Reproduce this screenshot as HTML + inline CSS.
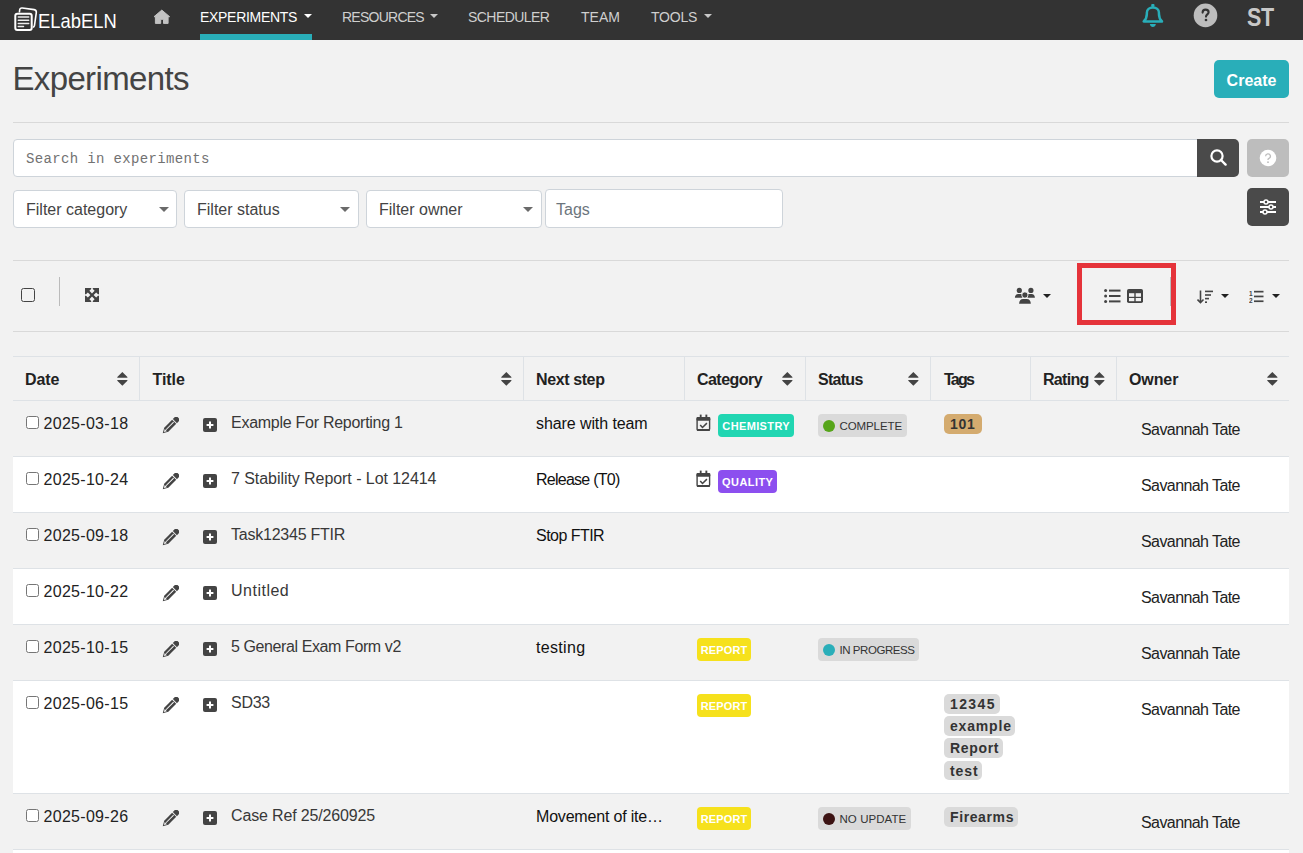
<!DOCTYPE html>
<html><head><meta charset="utf-8">
<style>
*{box-sizing:border-box;margin:0;padding:0}
html,body{width:1303px;height:853px;overflow:hidden}
body{background:#f2f2f2;font-family:"Liberation Sans",sans-serif;color:#222;position:relative}
.abs{position:absolute}
#nav{position:absolute;left:0;top:0;width:1303px;height:40px;background:#333}
.navt{position:absolute;top:9px;font-size:14px;line-height:16px;color:#cfcfcf;white-space:nowrap}
.caret{position:absolute;width:0;height:0;border-left:4px solid transparent;border-right:4px solid transparent;border-top:4px solid #c8c8c8}
.hr{position:absolute;left:13px;width:1276px;height:1px;background:#d9d9d9}
.inp{position:absolute;background:#fff;border:1px solid #ced4da;border-radius:4px}
.sel{font-size:16px;color:#444}
.btn{position:absolute;border-radius:5px}
.th{position:absolute;color:#222;white-space:nowrap}
.td{position:absolute;color:#222;white-space:nowrap}
.cb{position:absolute;width:13px;height:13px;border:1px solid #767676;border-radius:2.5px;background:#fff}
.badge{position:absolute;height:23px;border-radius:4px;color:#fff;font-weight:bold;font-size:11px;line-height:25px;text-align:center;white-space:nowrap}
.sbadge{position:absolute;white-space:nowrap;height:23px;border-radius:4px;background:#dadada;color:#333;font-size:11.5px;line-height:25px;padding-left:21.5px}
.dot{position:absolute;left:5px;top:5.5px;width:12px;height:12px;border-radius:6px}
.tag{position:absolute;height:19.5px;border-radius:5px;background:#dadada;color:#333;font-weight:bold;font-size:14px;line-height:20px;padding:0 0 0 6px;white-space:nowrap}
</style></head>
<body>
<div id="nav">
  <svg class="abs" style="left:10px;top:4px" width="30" height="30" viewBox="0 0 30 30">
    <path d="M9.4 8.5 L9.6 6.6 Q9.7 3.7 12.3 4 L24.2 5.6 Q26.6 6 26.3 8.6 L24.5 21.3 Q24.2 23.2 22.9 23.1" fill="none" stroke="#fff" stroke-width="1.6" stroke-linejoin="round"/>
    <rect x="5.3" y="9.8" width="16.4" height="16.2" rx="2" fill="#333" stroke="#fff" stroke-width="2"/>
    <path d="M8.3 13.1h10.4M8.3 16.3h10.4M8.3 19.5h10.4M8.3 22.5h5.2" stroke="#eee" stroke-width="1.5" stroke-linecap="round"/>
  </svg>
  <div class="abs" style="left:37.5px;top:9px;font-size:21px;line-height:24px;color:#fff;transform:scaleX(0.875);transform-origin:0 0">ELabELN</div>
  <svg class="abs" style="left:152px;top:9px" width="19" height="16" viewBox="0 0 19 16">
    <path d="M9.8 1.1 L2 7.7 L3.4 7.7 L3.4 14.4 L8.7 14.4 L8.7 10.3 L11.5 10.3 L11.5 14.4 L16.1 14.4 L16.1 7.7 L17.6 7.7 Z" fill="#c2c2c2" stroke="#c2c2c2" stroke-width="1" stroke-linejoin="round"/>
  </svg>
  <div class="navt" style="left:200px;color:#fff;letter-spacing:-0.3px">EXPERIMENTS</div>
  <div class="caret" style="left:304px;top:14px;border-top-color:#fff"></div>
  <div class="abs" style="left:200px;top:34px;width:112px;height:6px;background:#29aeb9"></div>
  <div class="navt" style="left:342px;letter-spacing:-0.75px">RESOURCES</div>
  <div class="caret" style="left:430px;top:14px"></div>
  <div class="navt" style="left:468px;letter-spacing:-0.55px">SCHEDULER</div>
  <div class="navt" style="left:581px;letter-spacing:0px">TEAM</div>
  <div class="navt" style="left:651px;letter-spacing:-0.2px">TOOLS</div>
  <div class="caret" style="left:704px;top:14px"></div>
  <svg class="abs" style="left:1138px;top:0px" width="30" height="30" viewBox="0 0 30 30">
    <rect x="13.2" y="3.9" width="3.3" height="3" rx="1" fill="#29aeb9"/>
    <path d="M5.7 21.4 L24 21.4 C21.6 19 20.95 17 20.95 14 V12.7 C20.95 9.4 18.4 7.45 14.9 7.45 C11.4 7.45 8.85 9.4 8.85 12.7 V14 C8.85 17 8.2 19 5.7 21.4 Z" fill="none" stroke="#29aeb9" stroke-width="2.5" stroke-linejoin="round"/>
    <path d="M11.8 24.1 H17.9 C17.5 26 16.5 27.1 14.85 27.1 C13.2 27.1 12.2 26 11.8 24.1 Z" fill="#29aeb9"/>
  </svg>
  <svg class="abs" style="left:1193px;top:3px" width="25" height="25" viewBox="0 0 25 25">
    <circle cx="12.5" cy="12.4" r="11.8" fill="#bdbdbd"/>
    <path d="M9.6 9.6 C9.6 7.6 10.9 6.6 12.6 6.6 C14.4 6.6 15.6 7.7 15.6 9.2 C15.6 11.3 13 11.4 13 13.6" fill="none" stroke="#333" stroke-width="2.1" stroke-linecap="round"/>
    <circle cx="13" cy="17" r="1.35" fill="#333"/>
  </svg>
  <div class="abs" style="left:1246.5px;top:3px;font-size:25px;line-height:28px;font-weight:bold;color:#c8c8c8;letter-spacing:-0.5px;transform:scaleX(0.86);transform-origin:0 0">ST</div>
</div>

<div class="abs" style="left:12.5px;top:60px;font-size:33px;line-height:38px;letter-spacing:-0.65px;color:#444">Experiments</div>
<div class="btn" style="left:1214px;top:60px;width:75px;height:38px;background:#29aeb9;color:#fff;font-weight:bold;font-size:16px;text-align:center;line-height:41px">Create</div>
<div class="hr" style="top:122px"></div>

<!-- search -->
<div class="inp" style="left:13px;top:139px;width:1185px;height:38px;border-radius:4px 0 0 4px"></div>
<div class="abs" style="left:26px;top:151px;font-family:'Liberation Mono',monospace;font-size:14px;letter-spacing:0.35px;color:#727272">Search in experiments</div>
<div class="btn" style="left:1197px;top:139px;width:42px;height:38px;background:#4a4a4a;border-radius:0 5px 5px 0"></div>
<svg class="abs" style="left:1210px;top:149px" width="17" height="17" viewBox="0 0 17 17">
  <circle cx="7" cy="7" r="5.6" fill="none" stroke="#fff" stroke-width="2.2"/>
  <path d="M11 11l4.6 4.6" stroke="#fff" stroke-width="2.4" stroke-linecap="round"/>
</svg>
<div class="btn" style="left:1247px;top:139px;width:42px;height:38px;background:#bdbdbd"></div>
<svg class="abs" style="left:1259px;top:149px" width="18" height="18" viewBox="0 0 18 18">
  <circle cx="9" cy="9" r="8.3" fill="#fff"/>
  <path d="M6.6 7.2a2.4 2.4 0 1 1 3.4 2.2c-.6.3-1 .7-1 1.4v.3" fill="none" stroke="#bdbdbd" stroke-width="1.3"/>
  <circle cx="9" cy="13.2" r="0.9" fill="#bdbdbd"/>
</svg>

<div class="inp" style="left:13px;top:190px;width:164px;height:38px"></div>
<div class="inp" style="left:184px;top:190px;width:175px;height:38px"></div>
<div class="inp" style="left:366px;top:190px;width:176px;height:38px"></div>
<div class="inp" style="left:545px;top:189px;width:238px;height:39px"></div>
<div class="sel" style="position:absolute;left:26px;top:201px">Filter category</div>
<div class="caret" style="left:159px;top:207px;border-top-color:#6a6a6a;border-left-width:5px;border-right-width:5px;border-top-width:5px"></div>
<div class="sel" style="position:absolute;left:197px;top:201px">Filter status</div>
<div class="caret" style="left:340px;top:207px;border-top-color:#6a6a6a;border-left-width:5px;border-right-width:5px;border-top-width:5px"></div>
<div class="sel" style="position:absolute;left:379px;top:201px">Filter owner</div>
<div class="caret" style="left:522.5px;top:207px;border-top-color:#6a6a6a;border-left-width:5px;border-right-width:5px;border-top-width:5px"></div>
<div class="sel" style="position:absolute;left:556px;top:201px;color:#6c757d">Tags</div>
<div class="btn" style="left:1247px;top:188px;width:42px;height:38px;background:#4a4a4a"></div>
<svg class="abs" style="left:1259px;top:199px" width="18" height="18" viewBox="0 0 18 18">
  <path d="M1 3h16M1 8h16M1 13h16" stroke="#fff" stroke-width="1.8"/>
  <circle cx="7" cy="3" r="2" fill="#4a4a4a" stroke="#fff" stroke-width="1.5"/>
  <circle cx="12" cy="8" r="2" fill="#4a4a4a" stroke="#fff" stroke-width="1.5"/>
  <circle cx="6" cy="13" r="2" fill="#4a4a4a" stroke="#fff" stroke-width="1.5"/>
</svg>

<div class="hr" style="top:260px"></div>
<div class="hr" style="top:331px"></div>

<!-- toolbar -->
<div class="abs" style="left:21px;top:288px;width:14px;height:14px;border:1.5px solid #444;border-radius:2.5px"></div>
<div class="abs" style="left:59px;top:277px;width:1px;height:29px;background:#bbb"></div>
<svg class="abs" style="left:85px;top:288px" width="14" height="14" viewBox="0 0 14 14">
  <rect x="0" y="0" width="14" height="14" fill="#444"/>
  <g fill="#f2f2f2"><path d="M6.2 0 L7.8 0 L7.8 1 L9.6 2.8 L7 5.4 L4.4 2.8 L6.2 1 Z"/><path d="M6.2 0 L7.8 0 L7.8 1 L9.6 2.8 L7 5.4 L4.4 2.8 L6.2 1 Z" transform="rotate(90 7 7)"/><path d="M6.2 0 L7.8 0 L7.8 1 L9.6 2.8 L7 5.4 L4.4 2.8 L6.2 1 Z" transform="rotate(180 7 7)"/><path d="M6.2 0 L7.8 0 L7.8 1 L9.6 2.8 L7 5.4 L4.4 2.8 L6.2 1 Z" transform="rotate(270 7 7)"/></g>
</svg>
<!-- users -->
<svg class="abs" style="left:1014px;top:287px" width="22" height="18" viewBox="0 0 22 18">
  <circle cx="5.3" cy="3.4" r="2.6" fill="#444"/><circle cx="16.9" cy="3.4" r="2.6" fill="#444"/>
  <path d="M0.9 10.8 C0.9 8.6 2.2 7 4.2 7 H7.6 C7.6 8.5 8 9.8 8.3 10.8 Z" fill="#444"/>
  <path d="M20.9 10.8 C20.9 8.6 19.6 7 17.6 7 H14.2 C14.2 8.5 13.8 9.8 13.5 10.8 Z" fill="#444"/>
  <circle cx="10.9" cy="8" r="3.1" fill="#444" stroke="#f2f2f2" stroke-width="0.8"/>
  <path d="M5.1 16.8 C5.1 13.8 6.8 12 9 12 H12.9 C15.1 12 16.8 13.8 16.8 16.8 Z" fill="#444"/>
</svg>
<div class="caret" style="left:1043px;top:294px;border-top-color:#222;border-left-width:4px;border-right-width:4px;border-top-width:4.5px"></div>
<!-- red box -->
<div class="abs" style="left:1077px;top:263px;width:99px;height:62px;border:5px solid #e5333a"></div>
<div class="abs" style="left:1170px;top:277px;width:1px;height:29px;background:#bbb"></div>
<svg class="abs" style="left:1104px;top:289px" width="17" height="14" viewBox="0 0 17 14">
  <circle cx="1.6" cy="1.6" r="1.5" fill="#444"/><circle cx="1.6" cy="7" r="1.5" fill="#444"/><circle cx="1.6" cy="12.4" r="1.5" fill="#444"/>
  <rect x="5" y="0.6" width="11.5" height="2" fill="#444"/><rect x="5" y="6" width="11.5" height="2" fill="#444"/><rect x="5" y="11.4" width="11.5" height="2" fill="#444"/>
</svg>
<svg class="abs" style="left:1127px;top:289px" width="16" height="14" viewBox="0 0 16 14">
  <rect x="0" y="0" width="16" height="14" rx="1.8" fill="#444"/>
  <rect x="2" y="4.2" width="5.3" height="3.6" fill="#f2f2f2"/><rect x="8.7" y="4.2" width="5.3" height="3.6" fill="#f2f2f2"/>
  <rect x="2" y="9" width="5.3" height="3.2" fill="#f2f2f2"/><rect x="8.7" y="9" width="5.3" height="3.2" fill="#f2f2f2"/>
</svg>
<!-- sort amount -->
<svg class="abs" style="left:1197px;top:290px" width="16" height="14" viewBox="0 0 16 14">
  <path d="M3.5 0.5v12 M0.5 9.5l3 3.2 3-3.2" fill="none" stroke="#444" stroke-width="1.6"/>
  <rect x="8" y="0.6" width="8" height="1.6" fill="#444"/><rect x="8" y="4.2" width="6" height="1.6" fill="#444"/>
  <rect x="8" y="7.8" width="4" height="1.6" fill="#444"/><rect x="8" y="11.4" width="2" height="1.6" fill="#444"/>
</svg>
<div class="caret" style="left:1221px;top:294px;border-top-color:#222;border-top-width:4.5px"></div>
<!-- list ol -->
<svg class="abs" style="left:1249px;top:290px" width="15" height="13" viewBox="0 0 15 13">
  <text x="0" y="5.5" font-family="Liberation Sans" font-weight="bold" font-size="6.5" fill="#444">1</text>
  <text x="0" y="12.8" font-family="Liberation Sans" font-weight="bold" font-size="6.5" fill="#444">2</text>
  <rect x="5" y="0.8" width="9.5" height="1.7" fill="#444"/><rect x="5" y="5.6" width="9.5" height="1.7" fill="#444"/><rect x="5" y="10.4" width="9.5" height="1.7" fill="#444"/>
</svg>
<div class="caret" style="left:1272px;top:294px;border-top-color:#222;border-top-width:4.5px"></div>

<!-- table -->
<div id="tbl" class="abs" style="left:13px;top:356px;width:1276px;height:497px">
<div class="abs" style="left:0;top:0;width:1276px;height:1px;background:#dee2e6"></div>
<div class="abs" style="left:0;top:44px;width:1276px;height:1px;background:#dee2e6"></div>
<div class="abs" style="left:126px;top:1px;width:1px;height:43px;background:#dee2e6"></div>
<div class="abs" style="left:510px;top:1px;width:1px;height:43px;background:#dee2e6"></div>
<div class="abs" style="left:671px;top:1px;width:1px;height:43px;background:#dee2e6"></div>
<div class="abs" style="left:792px;top:1px;width:1px;height:43px;background:#dee2e6"></div>
<div class="abs" style="left:917px;top:1px;width:1px;height:43px;background:#dee2e6"></div>
<div class="abs" style="left:1017px;top:1px;width:1px;height:43px;background:#dee2e6"></div>
<div class="abs" style="left:1103px;top:1px;width:1px;height:43px;background:#dee2e6"></div>
<div class="abs" style="left:0;top:45px;width:1276px;height:55px;background:#f2f2f2"></div>
<div class="abs" style="left:0;top:100px;width:1276px;height:1px;background:#dee2e6"></div>
<div class="abs" style="left:0;top:101px;width:1276px;height:55px;background:#fff"></div>
<div class="abs" style="left:0;top:156px;width:1276px;height:1px;background:#dee2e6"></div>
<div class="abs" style="left:0;top:157px;width:1276px;height:55px;background:#f2f2f2"></div>
<div class="abs" style="left:0;top:212px;width:1276px;height:1px;background:#dee2e6"></div>
<div class="abs" style="left:0;top:213px;width:1276px;height:55px;background:#fff"></div>
<div class="abs" style="left:0;top:268px;width:1276px;height:1px;background:#dee2e6"></div>
<div class="abs" style="left:0;top:269px;width:1276px;height:55px;background:#f2f2f2"></div>
<div class="abs" style="left:0;top:324px;width:1276px;height:1px;background:#dee2e6"></div>
<div class="abs" style="left:0;top:325px;width:1276px;height:112px;background:#fff"></div>
<div class="abs" style="left:0;top:437px;width:1276px;height:1px;background:#dee2e6"></div>
<div class="abs" style="left:0;top:438px;width:1276px;height:55px;background:#f2f2f2"></div>
<div class="abs" style="left:0;top:493px;width:1276px;height:1px;background:#dee2e6"></div>
<div class="abs" style="left:0;top:494px;width:1276px;height:10px;background:#fff"></div>
<div class="th" style="left:12px;top:16px;font-size:16px;line-height:16px;letter-spacing:-0.1px;font-weight:bold;">Date</div>
<svg class="abs" style="left:104px;top:16px" width="11" height="15" viewBox="0 0 11 15"><path d="M5.35 0 L10.4 5.1 L10.4 5.8 L0.3 5.8 L0.3 5.1 Z M0.3 8 L10.4 8 L10.4 8.7 L5.35 13.8 L0.3 8.7 Z" fill="#444"/></svg>
<div class="th" style="left:139.5px;top:16px;font-size:16px;line-height:16px;letter-spacing:-0.05px;font-weight:bold;">Title</div>
<svg class="abs" style="left:488px;top:16px" width="11" height="15" viewBox="0 0 11 15"><path d="M5.35 0 L10.4 5.1 L10.4 5.8 L0.3 5.8 L0.3 5.1 Z M0.3 8 L10.4 8 L10.4 8.7 L5.35 13.8 L0.3 8.7 Z" fill="#444"/></svg>
<div class="th" style="left:523px;top:16px;font-size:16px;line-height:16px;letter-spacing:-0.39px;font-weight:bold;">Next step</div>
<div class="th" style="left:684px;top:16px;font-size:16px;line-height:16px;letter-spacing:-0.54px;font-weight:bold;">Category</div>
<svg class="abs" style="left:769px;top:16px" width="11" height="15" viewBox="0 0 11 15"><path d="M5.35 0 L10.4 5.1 L10.4 5.8 L0.3 5.8 L0.3 5.1 Z M0.3 8 L10.4 8 L10.4 8.7 L5.35 13.8 L0.3 8.7 Z" fill="#444"/></svg>
<div class="th" style="left:805px;top:16px;font-size:16px;line-height:16px;letter-spacing:-0.72px;font-weight:bold;">Status</div>
<svg class="abs" style="left:895px;top:16px" width="11" height="15" viewBox="0 0 11 15"><path d="M5.35 0 L10.4 5.1 L10.4 5.8 L0.3 5.8 L0.3 5.1 Z M0.3 8 L10.4 8 L10.4 8.7 L5.35 13.8 L0.3 8.7 Z" fill="#444"/></svg>
<div class="th" style="left:931px;top:16px;font-size:16px;line-height:16px;letter-spacing:-1.73px;font-weight:bold;">Tags</div>
<div class="th" style="left:1030px;top:16px;font-size:16px;line-height:16px;letter-spacing:-0.7px;font-weight:bold;">Rating</div>
<svg class="abs" style="left:1081px;top:16px" width="11" height="15" viewBox="0 0 11 15"><path d="M5.35 0 L10.4 5.1 L10.4 5.8 L0.3 5.8 L0.3 5.1 Z M0.3 8 L10.4 8 L10.4 8.7 L5.35 13.8 L0.3 8.7 Z" fill="#444"/></svg>
<div class="th" style="left:1116px;top:16px;font-size:16px;line-height:16px;letter-spacing:-0.1px;font-weight:bold;">Owner</div>
<svg class="abs" style="left:1254px;top:16px" width="11" height="15" viewBox="0 0 11 15"><path d="M5.35 0 L10.4 5.1 L10.4 5.8 L0.3 5.8 L0.3 5.1 Z M0.3 8 L10.4 8 L10.4 8.7 L5.35 13.8 L0.3 8.7 Z" fill="#444"/></svg>
<div class="cb" style="left:13px;top:60px"></div>
<div class="td" style="left:30.5px;top:59.5px;font-size:16px;line-height:16px;letter-spacing:0.3px;">2025-03-18</div>
<svg class="abs" style="left:149px;top:61px" width="17" height="17" viewBox="0 0 17 17"><g transform="translate(8.5 8.5) rotate(-45)"><path d="M-11 0 L-6 -2.9 L5.2 -2.9 L5.2 2.9 L-6 2.9 Z" fill="#444"/><path d="M-6.2 -0.2 L4.6 -0.2" stroke="#f2f2f2" stroke-width="1.0"/><path d="M-9.3 0 L-6.6 -1.5 L-6.6 1.5 Z" fill="#f2f2f2"/><path d="M6.2 -2.9 L9.2 -2.9 Q11 -2.9 11 -1.1 L11 1.1 Q11 2.9 9.2 2.9 L6.2 2.9 Z" fill="#444"/></g></svg>
<svg class="abs" style="left:189.5px;top:62px" width="14" height="14" viewBox="0 0 14 14"><rect x="0" y="0" width="14" height="14" rx="2" fill="#444"/><path d="M7 3.6v6.8 M3.6 7h6.8" stroke="#fff" stroke-width="2"/></svg>
<div class="td" style="left:218px;top:58.5px;font-size:16px;line-height:16px;letter-spacing:-0.27px;color:#383838;">Example For Reporting 1</div>
<div class="td" style="left:523px;top:59.5px;font-size:16px;line-height:16px;letter-spacing:-0.09px;color:#111;">share with team</div>
<svg class="abs" style="left:683px;top:58px" width="15" height="18" viewBox="0 0 15 18"><rect x="3.8" y="0.6" width="1.8" height="3" fill="#444"/><rect x="9.4" y="0.6" width="1.9" height="3" fill="#444"/><rect x="1.1" y="3.6" width="12.5" height="12.7" rx="1.4" fill="none" stroke="#444" stroke-width="1.4"/><rect x="0.5" y="2.9" width="13.8" height="3.9" rx="1.2" fill="#444"/><rect x="0.8" y="15" width="13.2" height="2" rx="1" fill="#444"/><path d="M4.2 10.9 L6.5 13.5 L10.9 9.1" fill="none" stroke="#444" stroke-width="1.5"/></svg>
<div class="badge" style="left:705px;top:58px;width:76px;background:#21d6b2;letter-spacing:0.36px;text-indent:0.36px">CHEMISTRY</div>
<div class="sbadge" style="left:805px;top:58px;width:89px;letter-spacing:-0.1px"><span class="dot" style="background:#56a51a"></span>COMPLETE</div>
<div class="tag" style="left:931px;top:58.0px;width:38px;background:#d4ab6f;letter-spacing:0.75px">101</div>
<div class="td" style="left:1128px;top:66px;font-size:16px;line-height:16px;letter-spacing:-0.58px;">Savannah Tate</div>
<div class="cb" style="left:13px;top:116px"></div>
<div class="td" style="left:30.5px;top:115.5px;font-size:16px;line-height:16px;letter-spacing:0.3px;">2025-10-24</div>
<svg class="abs" style="left:149px;top:117px" width="17" height="17" viewBox="0 0 17 17"><g transform="translate(8.5 8.5) rotate(-45)"><path d="M-11 0 L-6 -2.9 L5.2 -2.9 L5.2 2.9 L-6 2.9 Z" fill="#444"/><path d="M-6.2 -0.2 L4.6 -0.2" stroke="#fff" stroke-width="1.0"/><path d="M-9.3 0 L-6.6 -1.5 L-6.6 1.5 Z" fill="#fff"/><path d="M6.2 -2.9 L9.2 -2.9 Q11 -2.9 11 -1.1 L11 1.1 Q11 2.9 9.2 2.9 L6.2 2.9 Z" fill="#444"/></g></svg>
<svg class="abs" style="left:189.5px;top:118px" width="14" height="14" viewBox="0 0 14 14"><rect x="0" y="0" width="14" height="14" rx="2" fill="#444"/><path d="M7 3.6v6.8 M3.6 7h6.8" stroke="#fff" stroke-width="2"/></svg>
<div class="td" style="left:218px;top:114.5px;font-size:16px;line-height:16px;letter-spacing:-0.06px;color:#383838;">7 Stability Report - Lot 12414</div>
<div class="td" style="left:523px;top:115.5px;font-size:16px;line-height:16px;letter-spacing:-0.74px;color:#111;">Release (T0)</div>
<svg class="abs" style="left:683px;top:114px" width="15" height="18" viewBox="0 0 15 18"><rect x="3.8" y="0.6" width="1.8" height="3" fill="#444"/><rect x="9.4" y="0.6" width="1.9" height="3" fill="#444"/><rect x="1.1" y="3.6" width="12.5" height="12.7" rx="1.4" fill="none" stroke="#444" stroke-width="1.4"/><rect x="0.5" y="2.9" width="13.8" height="3.9" rx="1.2" fill="#444"/><rect x="0.8" y="15" width="13.2" height="2" rx="1" fill="#444"/><path d="M4.2 10.9 L6.5 13.5 L10.9 9.1" fill="none" stroke="#444" stroke-width="1.5"/></svg>
<div class="badge" style="left:705px;top:114px;width:59px;background:#8c4fef;letter-spacing:0.42px;text-indent:0.42px">QUALITY</div>
<div class="td" style="left:1128px;top:122px;font-size:16px;line-height:16px;letter-spacing:-0.58px;">Savannah Tate</div>
<div class="cb" style="left:13px;top:172px"></div>
<div class="td" style="left:30.5px;top:171.5px;font-size:16px;line-height:16px;letter-spacing:0.3px;">2025-09-18</div>
<svg class="abs" style="left:149px;top:173px" width="17" height="17" viewBox="0 0 17 17"><g transform="translate(8.5 8.5) rotate(-45)"><path d="M-11 0 L-6 -2.9 L5.2 -2.9 L5.2 2.9 L-6 2.9 Z" fill="#444"/><path d="M-6.2 -0.2 L4.6 -0.2" stroke="#f2f2f2" stroke-width="1.0"/><path d="M-9.3 0 L-6.6 -1.5 L-6.6 1.5 Z" fill="#f2f2f2"/><path d="M6.2 -2.9 L9.2 -2.9 Q11 -2.9 11 -1.1 L11 1.1 Q11 2.9 9.2 2.9 L6.2 2.9 Z" fill="#444"/></g></svg>
<svg class="abs" style="left:189.5px;top:174px" width="14" height="14" viewBox="0 0 14 14"><rect x="0" y="0" width="14" height="14" rx="2" fill="#444"/><path d="M7 3.6v6.8 M3.6 7h6.8" stroke="#fff" stroke-width="2"/></svg>
<div class="td" style="left:218px;top:170.5px;font-size:16px;line-height:16px;letter-spacing:-0.23px;color:#383838;">Task12345 FTIR</div>
<div class="td" style="left:523px;top:171.5px;font-size:16px;line-height:16px;letter-spacing:-0.53px;color:#111;">Stop FTIR</div>
<div class="td" style="left:1128px;top:178px;font-size:16px;line-height:16px;letter-spacing:-0.58px;">Savannah Tate</div>
<div class="cb" style="left:13px;top:228px"></div>
<div class="td" style="left:30.5px;top:227.5px;font-size:16px;line-height:16px;letter-spacing:0.3px;">2025-10-22</div>
<svg class="abs" style="left:149px;top:229px" width="17" height="17" viewBox="0 0 17 17"><g transform="translate(8.5 8.5) rotate(-45)"><path d="M-11 0 L-6 -2.9 L5.2 -2.9 L5.2 2.9 L-6 2.9 Z" fill="#444"/><path d="M-6.2 -0.2 L4.6 -0.2" stroke="#fff" stroke-width="1.0"/><path d="M-9.3 0 L-6.6 -1.5 L-6.6 1.5 Z" fill="#fff"/><path d="M6.2 -2.9 L9.2 -2.9 Q11 -2.9 11 -1.1 L11 1.1 Q11 2.9 9.2 2.9 L6.2 2.9 Z" fill="#444"/></g></svg>
<svg class="abs" style="left:189.5px;top:230px" width="14" height="14" viewBox="0 0 14 14"><rect x="0" y="0" width="14" height="14" rx="2" fill="#444"/><path d="M7 3.6v6.8 M3.6 7h6.8" stroke="#fff" stroke-width="2"/></svg>
<div class="td" style="left:218px;top:226.5px;font-size:16px;line-height:16px;letter-spacing:0.5px;color:#383838;">Untitled</div>
<div class="td" style="left:1128px;top:234px;font-size:16px;line-height:16px;letter-spacing:-0.58px;">Savannah Tate</div>
<div class="cb" style="left:13px;top:284px"></div>
<div class="td" style="left:30.5px;top:283.5px;font-size:16px;line-height:16px;letter-spacing:0.3px;">2025-10-15</div>
<svg class="abs" style="left:149px;top:285px" width="17" height="17" viewBox="0 0 17 17"><g transform="translate(8.5 8.5) rotate(-45)"><path d="M-11 0 L-6 -2.9 L5.2 -2.9 L5.2 2.9 L-6 2.9 Z" fill="#444"/><path d="M-6.2 -0.2 L4.6 -0.2" stroke="#f2f2f2" stroke-width="1.0"/><path d="M-9.3 0 L-6.6 -1.5 L-6.6 1.5 Z" fill="#f2f2f2"/><path d="M6.2 -2.9 L9.2 -2.9 Q11 -2.9 11 -1.1 L11 1.1 Q11 2.9 9.2 2.9 L6.2 2.9 Z" fill="#444"/></g></svg>
<svg class="abs" style="left:189.5px;top:286px" width="14" height="14" viewBox="0 0 14 14"><rect x="0" y="0" width="14" height="14" rx="2" fill="#444"/><path d="M7 3.6v6.8 M3.6 7h6.8" stroke="#fff" stroke-width="2"/></svg>
<div class="td" style="left:218px;top:282.5px;font-size:16px;line-height:16px;letter-spacing:-0.4px;color:#383838;">5 General Exam Form v2</div>
<div class="td" style="left:523px;top:283.5px;font-size:16px;line-height:16px;letter-spacing:0.33px;color:#111;">testing</div>
<div class="badge" style="left:684px;top:282px;width:54px;background:#f6e11c;letter-spacing:0.1px;text-indent:0.1px">REPORT</div>
<div class="sbadge" style="left:805px;top:282px;width:101px;letter-spacing:-0.45px"><span class="dot" style="background:#29aeb9"></span>IN PROGRESS</div>
<div class="td" style="left:1128px;top:290px;font-size:16px;line-height:16px;letter-spacing:-0.58px;">Savannah Tate</div>
<div class="cb" style="left:13px;top:340px"></div>
<div class="td" style="left:30.5px;top:339.5px;font-size:16px;line-height:16px;letter-spacing:0.3px;">2025-06-15</div>
<svg class="abs" style="left:149px;top:341px" width="17" height="17" viewBox="0 0 17 17"><g transform="translate(8.5 8.5) rotate(-45)"><path d="M-11 0 L-6 -2.9 L5.2 -2.9 L5.2 2.9 L-6 2.9 Z" fill="#444"/><path d="M-6.2 -0.2 L4.6 -0.2" stroke="#fff" stroke-width="1.0"/><path d="M-9.3 0 L-6.6 -1.5 L-6.6 1.5 Z" fill="#fff"/><path d="M6.2 -2.9 L9.2 -2.9 Q11 -2.9 11 -1.1 L11 1.1 Q11 2.9 9.2 2.9 L6.2 2.9 Z" fill="#444"/></g></svg>
<svg class="abs" style="left:189.5px;top:342px" width="14" height="14" viewBox="0 0 14 14"><rect x="0" y="0" width="14" height="14" rx="2" fill="#444"/><path d="M7 3.6v6.8 M3.6 7h6.8" stroke="#fff" stroke-width="2"/></svg>
<div class="td" style="left:218px;top:338.5px;font-size:16px;line-height:16px;letter-spacing:-0.27px;color:#383838;">SD33</div>
<div class="badge" style="left:684px;top:338px;width:54px;background:#f6e11c;letter-spacing:0.1px;text-indent:0.1px">REPORT</div>
<div class="tag" style="left:931px;top:338.0px;width:56px;letter-spacing:1.38px">12345</div>
<div class="tag" style="left:931px;top:360.20000000000005px;width:71px;letter-spacing:0.82px">example</div>
<div class="tag" style="left:931px;top:382.4px;width:59px;letter-spacing:0.66px">Report</div>
<div class="tag" style="left:931px;top:404.6px;width:38px;letter-spacing:0.93px">test</div>
<div class="td" style="left:1128px;top:346px;font-size:16px;line-height:16px;letter-spacing:-0.58px;">Savannah Tate</div>
<div class="cb" style="left:13px;top:453px"></div>
<div class="td" style="left:30.5px;top:452.5px;font-size:16px;line-height:16px;letter-spacing:0.3px;">2025-09-26</div>
<svg class="abs" style="left:149px;top:454px" width="17" height="17" viewBox="0 0 17 17"><g transform="translate(8.5 8.5) rotate(-45)"><path d="M-11 0 L-6 -2.9 L5.2 -2.9 L5.2 2.9 L-6 2.9 Z" fill="#444"/><path d="M-6.2 -0.2 L4.6 -0.2" stroke="#f2f2f2" stroke-width="1.0"/><path d="M-9.3 0 L-6.6 -1.5 L-6.6 1.5 Z" fill="#f2f2f2"/><path d="M6.2 -2.9 L9.2 -2.9 Q11 -2.9 11 -1.1 L11 1.1 Q11 2.9 9.2 2.9 L6.2 2.9 Z" fill="#444"/></g></svg>
<svg class="abs" style="left:189.5px;top:455px" width="14" height="14" viewBox="0 0 14 14"><rect x="0" y="0" width="14" height="14" rx="2" fill="#444"/><path d="M7 3.6v6.8 M3.6 7h6.8" stroke="#fff" stroke-width="2"/></svg>
<div class="td" style="left:218px;top:451.5px;font-size:16px;line-height:16px;letter-spacing:-0.15px;color:#383838;">Case Ref 25/260925</div>
<div class="td" style="left:523px;top:452.5px;font-size:16px;line-height:16px;letter-spacing:-0.19px;color:#111;">Movement of ite…</div>
<div class="badge" style="left:684px;top:451px;width:54px;background:#f6e11c;letter-spacing:0.1px;text-indent:0.1px">REPORT</div>
<div class="sbadge" style="left:805px;top:451px;width:93px;letter-spacing:0.06px"><span class="dot" style="background:#3b1212"></span>NO UPDATE</div>
<div class="tag" style="left:931px;top:451.0px;width:74px;letter-spacing:0.61px">Firearms</div>
<div class="td" style="left:1128px;top:459px;font-size:16px;line-height:16px;letter-spacing:-0.58px;">Savannah Tate</div>
</div>
</body></html>
